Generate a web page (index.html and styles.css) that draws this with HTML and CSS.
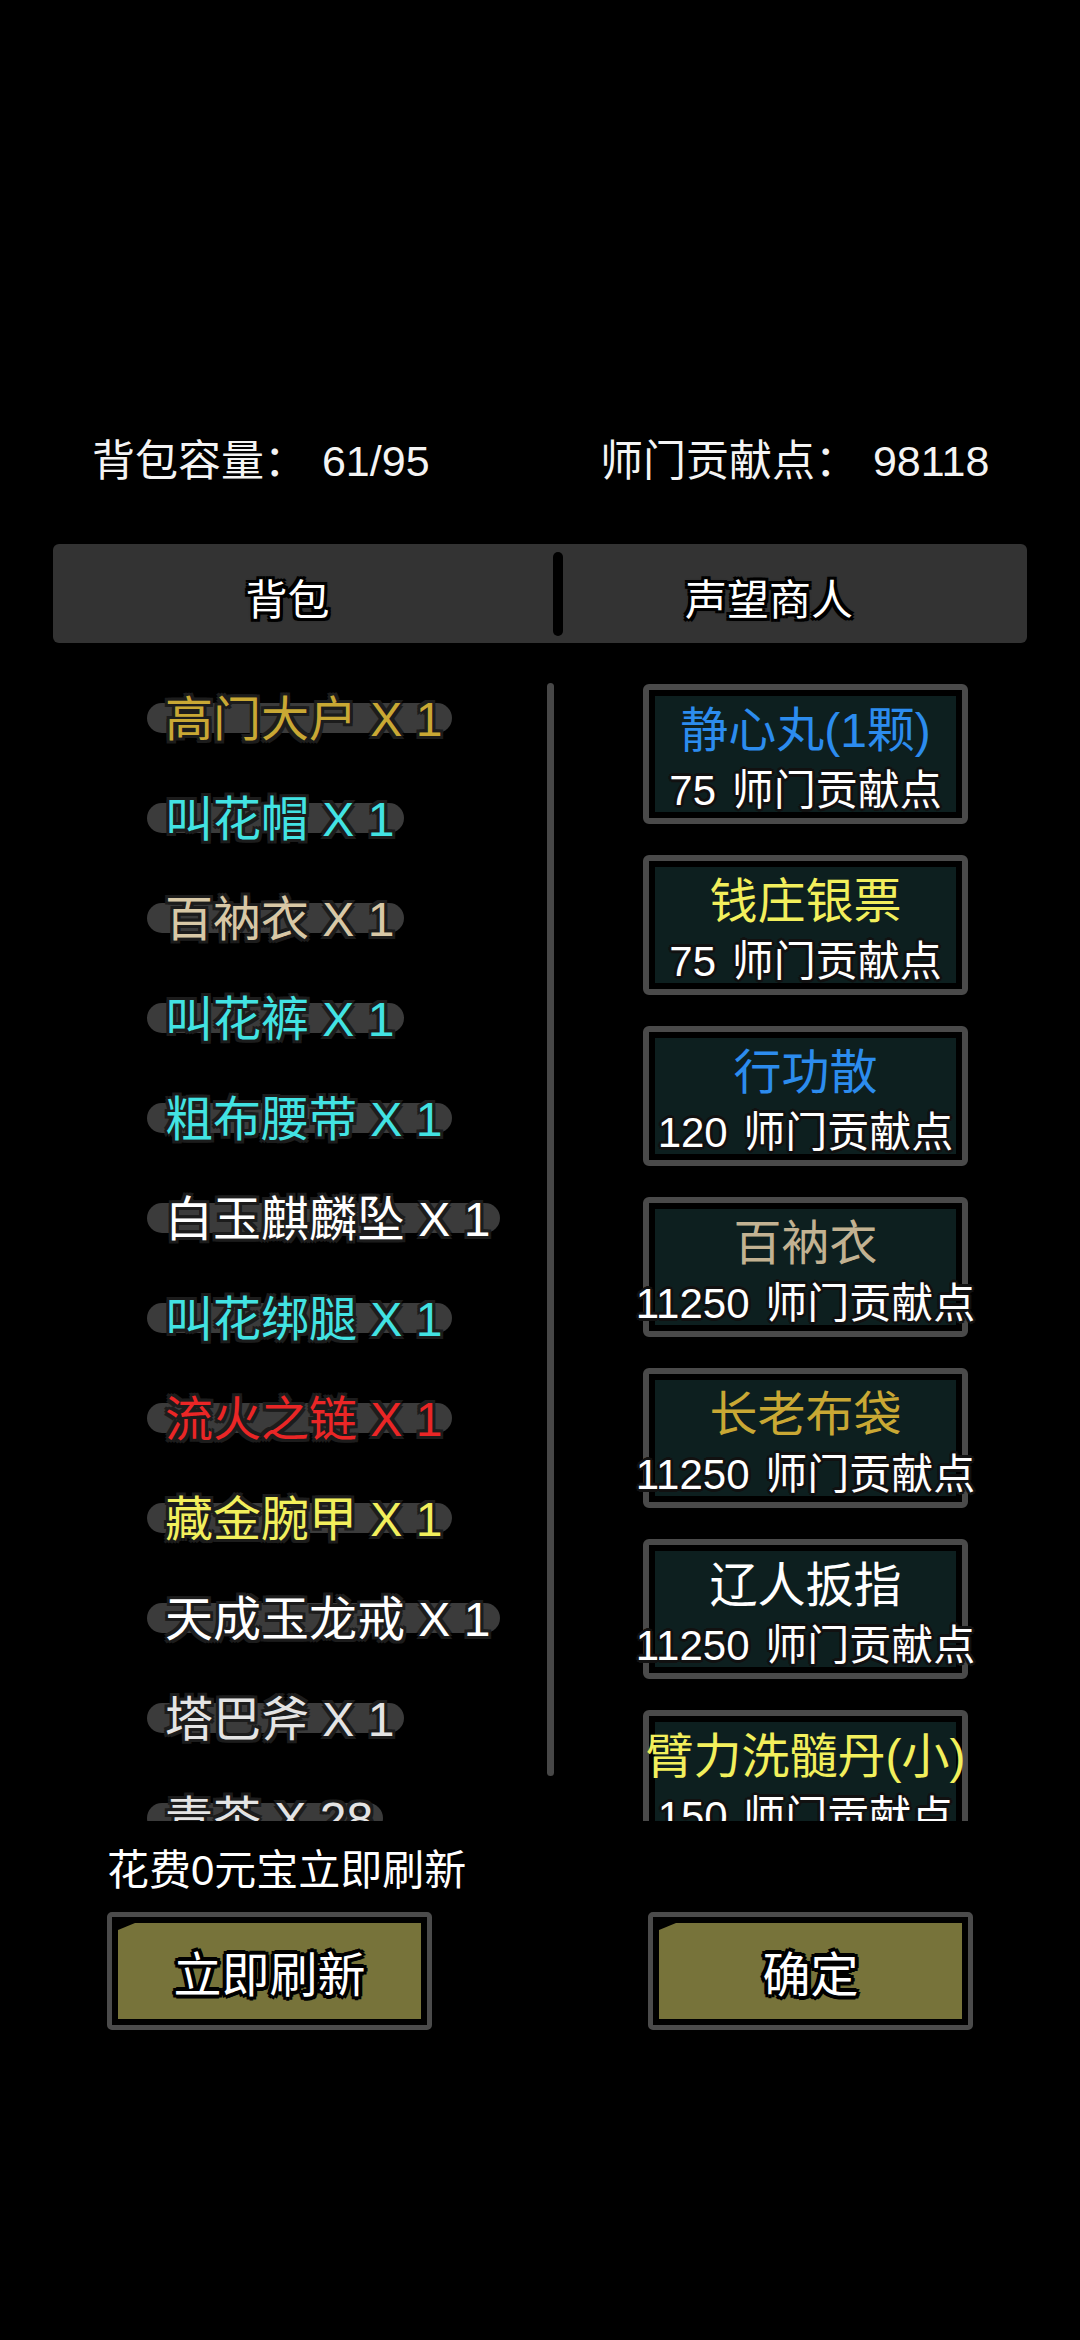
FILE: index.html
```html
<!DOCTYPE html>
<html lang="zh-CN">
<head>
<meta charset="utf-8">
<title>声望商人</title>
<link rel="stylesheet" href="styles.css">
</head>
<body>
<div class="screen">
  <div class="stats">
    <div class="stat stat-left">背包容量： 61/95</div>
    <div class="stat stat-right">师门贡献点： 98118</div>
  </div>

  <div class="tabs">
    <div class="tab tab-bag">背包</div>
    <div class="tab-divider"></div>
    <div class="tab tab-shop">声望商人</div>
  </div>

  <div class="content">
    <div class="bag-list">
      <div class="item"><span class="label c-gold">高门大户 X 1</span></div>
      <div class="item"><span class="label c-cyan">叫花帽 X 1</span></div>
      <div class="item"><span class="label c-tan">百衲衣 X 1</span></div>
      <div class="item"><span class="label c-cyan">叫花裤 X 1</span></div>
      <div class="item"><span class="label c-cyan">粗布腰带 X 1</span></div>
      <div class="item"><span class="label c-white">白玉麒麟坠 X 1</span></div>
      <div class="item"><span class="label c-cyan">叫花绑腿 X 1</span></div>
      <div class="item"><span class="label c-red">流火之链 X 1</span></div>
      <div class="item"><span class="label c-yellow">藏金腕甲 X 1</span></div>
      <div class="item"><span class="label c-white">天成玉龙戒 X 1</span></div>
      <div class="item"><span class="label c-grey">塔巴斧 X 1</span></div>
      <div class="item"><span class="label c-grey">青茶 X 28</span></div>
    </div>
    <div class="scrollbar"></div>
    <div class="shop-list">
      <div class="card"><div class="card-in"><div class="card-name c-blue">静心丸(1颗)</div><div class="card-price">75 师门贡献点</div></div></div>
      <div class="card"><div class="card-in"><div class="card-name c-yellow">钱庄银票</div><div class="card-price">75 师门贡献点</div></div></div>
      <div class="card"><div class="card-in"><div class="card-name c-blue">行功散</div><div class="card-price">120 师门贡献点</div></div></div>
      <div class="card"><div class="card-in"><div class="card-name c-tan2">百衲衣</div><div class="card-price">11250 师门贡献点</div></div></div>
      <div class="card"><div class="card-in"><div class="card-name c-gold">长老布袋</div><div class="card-price">11250 师门贡献点</div></div></div>
      <div class="card"><div class="card-in"><div class="card-name c-white">辽人扳指</div><div class="card-price">11250 师门贡献点</div></div></div>
      <div class="card"><div class="card-in"><div class="card-name c-yellow">臂力洗髓丹(小)</div><div class="card-price">150 师门贡献点</div></div></div>
    </div>
  </div>

  <div class="note">花费0元宝立即刷新</div>

  <div class="buttons">
    <div class="btn"><div class="btn-fill">立即刷新</div></div>
    <div class="btn"><div class="btn-fill">确定</div></div>
  </div>
</div>
</body>
</html>
```

FILE: styles.css
```css
html, body {
  margin: 0;
  padding: 0;
  background: #000;
}

body {
  width: 1080px;
  height: 2340px;
  overflow: hidden;
  color: #fff;
  font-family: "Liberation Sans", "Noto Sans CJK SC", sans-serif;
}

/* ---------- header stats ---------- */
.stats {
  display: flex;
  padding: 432px 0 0 92px;
  height: 58px;
}

.stat {
  font-size: 43px;
  line-height: 58px;
  white-space: pre;
  word-spacing: 3px;
  color: #f4f4f4;
}

.stat-left {
  width: 508px;
}

/* ---------- tabs ---------- */
.tabs {
  display: flex;
  margin: 54px 53px 0 53px;
  height: 99px;
  background: #333333;
  border-radius: 6px;
  align-items: flex-start;
}

.tab {
  box-sizing: border-box;
  height: 99px;
  padding-top: 14px;
  text-align: center;
  font-size: 42px;
  line-height: 85px;
  color: #fff;
  text-shadow:
    -3px -3px 0 #000, 0 -3px 0 #000, 3px -3px 0 #000, 3px 0 0 #000,
    3px 3px 0 #000, 0 3px 0 #000, -3px 3px 0 #000, -3px 0 0 #000,
    0 0 4px #000;
}

.tab-bag {
  width: 500px;
  padding-right: 31px;
}

.tab-divider {
  flex: none;
  align-self: center;
  width: 10px;
  height: 84px;
  background: #000;
  border-radius: 5px;
}

.tab-shop {
  flex: 1;
  padding-right: 52px;
}

/* ---------- content ---------- */
.content {
  display: flex;
  margin-top: 17px;
  height: 1161px;
  overflow: hidden;
}

.bag-list {
  flex: none;
  width: 547px;
  box-sizing: border-box;
  padding: 10px 0 0 165px;
  overflow: hidden;
}

.item {
  height: 100px;
  font-size: 48px;
  line-height: 100px;
  white-space: pre;
}

.label {
  position: relative;
  z-index: 0;
  display: inline-block;
  text-shadow:
    -3px -3px 0 #1c1c1c, 0 -3px 0 #1c1c1c, 3px -3px 0 #1c1c1c, 3px 0 0 #1c1c1c,
    3px 3px 0 #1c1c1c, 0 3px 0 #1c1c1c, -3px 3px 0 #1c1c1c, -3px 0 0 #1c1c1c;
}

.label::before {
  content: "";
  position: absolute;
  z-index: -1;
  left: -18px;
  right: -10px;
  top: 33px;
  height: 30px;
  border-radius: 15px;
  background: #3b3b3b;
}

.scrollbar {
  flex: none;
  width: 7px;
  height: 1093px;
  margin-top: 23px;
  background: #474747;
  border-radius: 4px;
}

.shop-list {
  flex: none;
  display: flex;
  flex-direction: column;
  gap: 31px;
  width: 325px;
  margin-left: 89px;
  padding-top: 24px;
}

.card {
  flex: none;
  box-sizing: border-box;
  height: 140px;
  border: 6px solid #4a4a4a;
  border-radius: 6px;
  padding: 6px;
  background: #000;
}

.card-in {
  box-sizing: border-box;
  height: 100%;
  padding-top: 7px;
  background: #0d1f1f;
  display: flex;
  flex-direction: column;
  align-items: center;
}

.card-name {
  font-size: 48px;
  line-height: 56px;
  white-space: nowrap;
}

.card-price {
  margin-top: 4px;
  font-size: 42px;
  line-height: 56px;
  white-space: nowrap;
  word-spacing: 4px;
  color: #fff;
  text-shadow:
    -2px -2px 0 #111, 0 -3px 0 #111, 2px -2px 0 #111, 3px 0 0 #111,
    2px 2px 0 #111, 0 3px 0 #111, -2px 2px 0 #111, -3px 0 0 #111;
}

/* ---------- colours ---------- */
.c-gold { color: #c9a834; }
.c-cyan { color: #42e3e3; }
.c-tan { color: #d8c8a6; }
.c-tan2 { color: #c2b292; }
.c-white { color: #ffffff; }
.c-red { color: #ea2626; }
.c-yellow { color: #f2ef5c; }
.c-grey { color: #e4e4e4; }
.c-blue { color: #2c8cee; }

/* ---------- bottom ---------- */
.note {
  margin: 21px 0 0 107px;
  font-size: 42px;
  line-height: 58px;
  color: #fff;
}

.buttons {
  display: flex;
  gap: 216px;
  margin: 12px 0 0 107px;
}

.btn {
  flex: none;
  box-sizing: border-box;
  width: 325px;
  height: 118px;
  border: 5px solid #4b4b4b;
  border-radius: 5px;
  padding: 6px;
  background: #000;
}

.btn-fill {
  height: 100%;
  background: #77733a;
  clip-path: polygon(0 7px, 17px 0, 100% 0, 100% 100%, 0 100%);
  display: flex;
  align-items: center;
  justify-content: center;
  font-size: 48px;
  color: #fff;
  text-shadow:
    -3px -3px 0 #000, 0 -4px 0 #000, 3px -3px 0 #000, 4px 0 0 #000,
    3px 3px 0 #000, 0 4px 0 #000, -3px 3px 0 #000, -4px 0 0 #000,
    0 0 3px #000;
}
```
